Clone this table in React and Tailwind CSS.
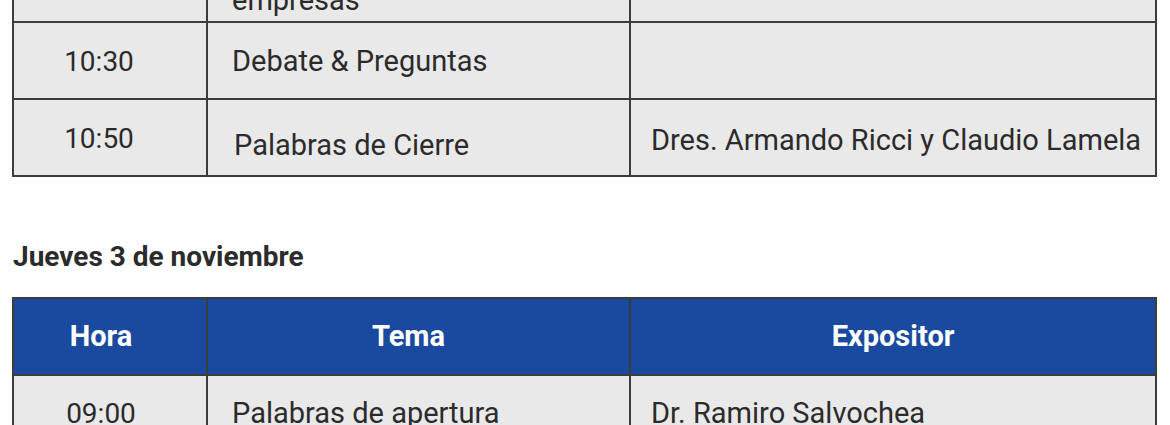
export default function App() {
  const cell = "border-r-2 border-b-2 border-[#3c3c3c] bg-[#e9e9e9] h-[77px] flex items-center";
  const head = "border-r-2 border-b-2 border-[#3c3c3c] bg-[#1a4a9f] h-[77px] flex items-center justify-center text-white font-bold text-[29px]";

  return (
    <div className="h-[425px] overflow-hidden bg-white text-[#2b2b2b]" style={{ fontFamily: "Roboto, 'Noto Sans', sans-serif" }}>
      <div className="-mt-[56px]">
        <div className="ml-[12px] w-[1145px] grid grid-cols-[194px_423px_526px] border-l-2 border-t-2 border-[#3c3c3c] text-[29px]">
          <div className={cell}></div>
          <div className={`${cell} items-end pl-[24px] pb-[6px] leading-none`}>empresas</div>
          <div className={cell}></div>

          <div className={`${cell} justify-center pr-[22px] pt-[3px] text-[28px]`}>10:30</div>
          <div className={`${cell} pl-[24px] pt-[3px]`}>Debate &amp; Preguntas</div>
          <div className={cell}></div>

          <div className={`${cell} justify-center pr-[22px] pt-[3px] text-[28px]`}>10:50</div>
          <div className={`${cell} pl-[26px] pt-[17px]`}>Palabras de Cierre</div>
          <div className={`${cell} pl-[20px] pt-[6px]`}>Dres. Armando Ricci y Claudio Lamela</div>
        </div>

        <h2 className="ml-[13px] mt-[66px] font-bold text-[28px] leading-none">Jueves 3 de noviembre</h2>

        <div className="ml-[12px] mt-[26px] w-[1145px] grid grid-cols-[194px_423px_526px] border-l-2 border-t-2 border-[#3c3c3c] text-[29px]">
          <div className={`${head} pr-[18px]`}>Hora</div>
          <div className={`${head} pr-[20px]`}>Tema</div>
          <div className={head}>Expositor</div>

          <div className={`${cell} justify-center pr-[18px] text-[28px]`}>09:00</div>
          <div className={`${cell} pl-[24px]`}>Palabras de apertura</div>
          <div className={`${cell} pl-[20px]`}>Dr. Ramiro Salvochea</div>
        </div>
      </div>
    </div>
  );
}
